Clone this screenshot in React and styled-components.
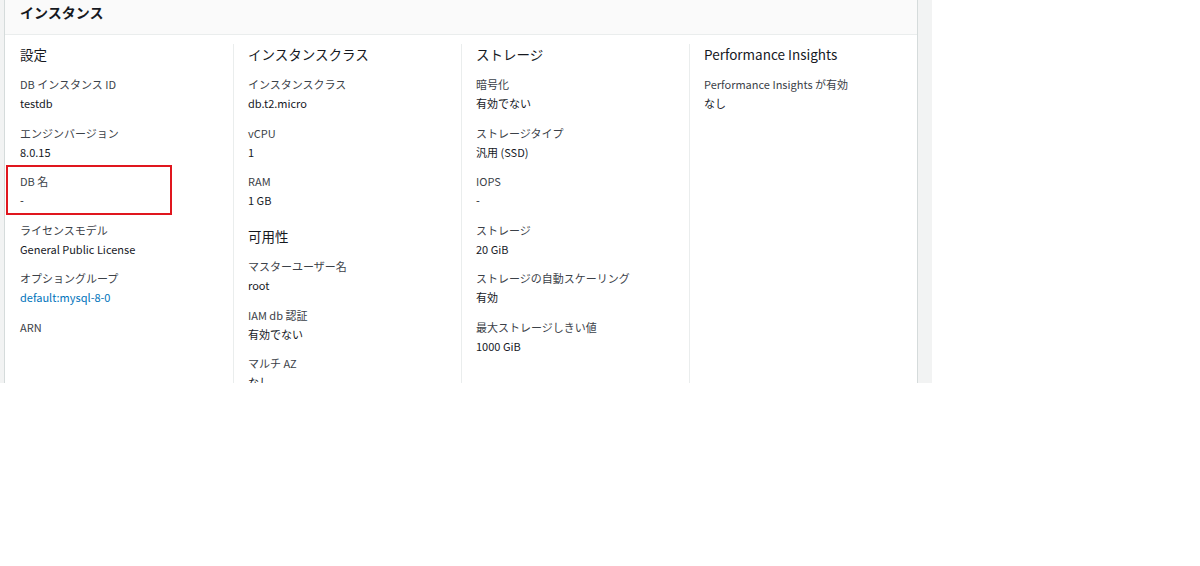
import React from "react";
import styled, { createGlobalStyle } from "styled-components";

const Global = createGlobalStyle`
  html, body { margin: 0; padding: 0; background: #ffffff; }
  body { font-family: "Noto Sans CJK JP", "Noto Sans", sans-serif; }
`;

const Frame = styled.div`
  width: 932px;
  height: 383px;
  background: #f2f3f3;
  padding: 0 14px 0 4px;
  box-sizing: border-box;
  overflow: hidden;
`;

const Card = styled.section`
  height: 100%;
  background: #ffffff;
  border-left: 1px solid #d5dbdb;
  border-right: 1px solid #d5dbdb;
  display: flex;
  flex-direction: column;
`;

const Header = styled.header`
  flex-shrink: 0;
  height: 34px;
  background: #fafafa;
  border-bottom: 1px solid #eaeded;
  padding: 0 15px;
  display: flex;
  align-items: flex-start;
`;

const Title = styled.h2`
  margin: 2px 0 0;
  font-size: 14px;
  line-height: 20px;
  font-weight: 700;
  color: #16191f;
`;

const Columns = styled.div`
  flex: 1;
  min-height: 0;
  overflow: hidden;
  margin-top: 9px;
  display: grid;
  grid-template-columns: repeat(4, 228px);
`;

const Column = styled.div`
  padding: 0 15px;
  box-sizing: border-box;
  ${(p) => (p.$divided ? "border-left: 1px solid #eaeded; padding-left: 14px;" : "")}
`;

const Heading = styled.h3`
  margin: ${(p) => (p.$sub ? "16.5px 0 11.5px" : "0 0 11px")};
  font-size: 13.5px;
  line-height: 20px;
  font-weight: 400;
  color: #16191f;
`;

const Item = styled.div`
  position: relative;
  margin-bottom: 11.5px;
`;

const Label = styled.div`
  font-size: 11px;
  line-height: 18px;
  color: #3b4148;
`;

const Value = styled.div`
  margin-top: 1px;
  font-size: 11px;
  line-height: 18px;
  color: #16191f;
`;

const Link = styled.a`
  color: #0073bb;
  text-decoration: none;
`;

const Highlight = styled.span`
  position: absolute;
  left: -14px;
  top: -7px;
  width: 166px;
  height: 50px;
  border: 2px solid #e0161e;
  box-sizing: border-box;
  pointer-events: none;
`;

const Field = ({ label, value, mark }) => (
  <Item>
    {mark && <Highlight />}
    <Label>{label}</Label>
    {value !== undefined && <Value>{value}</Value>}
  </Item>
);

export default function App() {
  return (
    <>
      <Global />
      <Frame>
        <Card>
          <Header>
            <Title>インスタンス</Title>
          </Header>
          <Columns>
            <Column>
              <Heading>設定</Heading>
              <Field label="DB インスタンス ID" value="testdb" />
              <Field label="エンジンバージョン" value="8.0.15" />
              <Field label="DB 名" value="-" mark />
              <Field label="ライセンスモデル" value="General Public License" />
              <Field
                label="オプショングループ"
                value={<Link href="#">default:mysql-8-0</Link>}
              />
              <Field label="ARN" />
            </Column>
            <Column $divided>
              <Heading>インスタンスクラス</Heading>
              <Field label="インスタンスクラス" value="db.t2.micro" />
              <Field label="vCPU" value="1" />
              <Field label="RAM" value="1 GB" />
              <Heading $sub>可用性</Heading>
              <Field label="マスターユーザー名" value="root" />
              <Field label="IAM db 認証" value="有効でない" />
              <Field label="マルチ AZ" value="なし" />
            </Column>
            <Column $divided>
              <Heading>ストレージ</Heading>
              <Field label="暗号化" value="有効でない" />
              <Field label="ストレージタイプ" value="汎用 (SSD)" />
              <Field label="IOPS" value="-" />
              <Field label="ストレージ" value="20 GiB" />
              <Field label="ストレージの自動スケーリング" value="有効" />
              <Field label="最大ストレージしきい値" value="1000 GiB" />
            </Column>
            <Column $divided>
              <Heading>Performance Insights</Heading>
              <Field label="Performance Insights が有効" value="なし" />
            </Column>
          </Columns>
        </Card>
      </Frame>
    </>
  );
}
